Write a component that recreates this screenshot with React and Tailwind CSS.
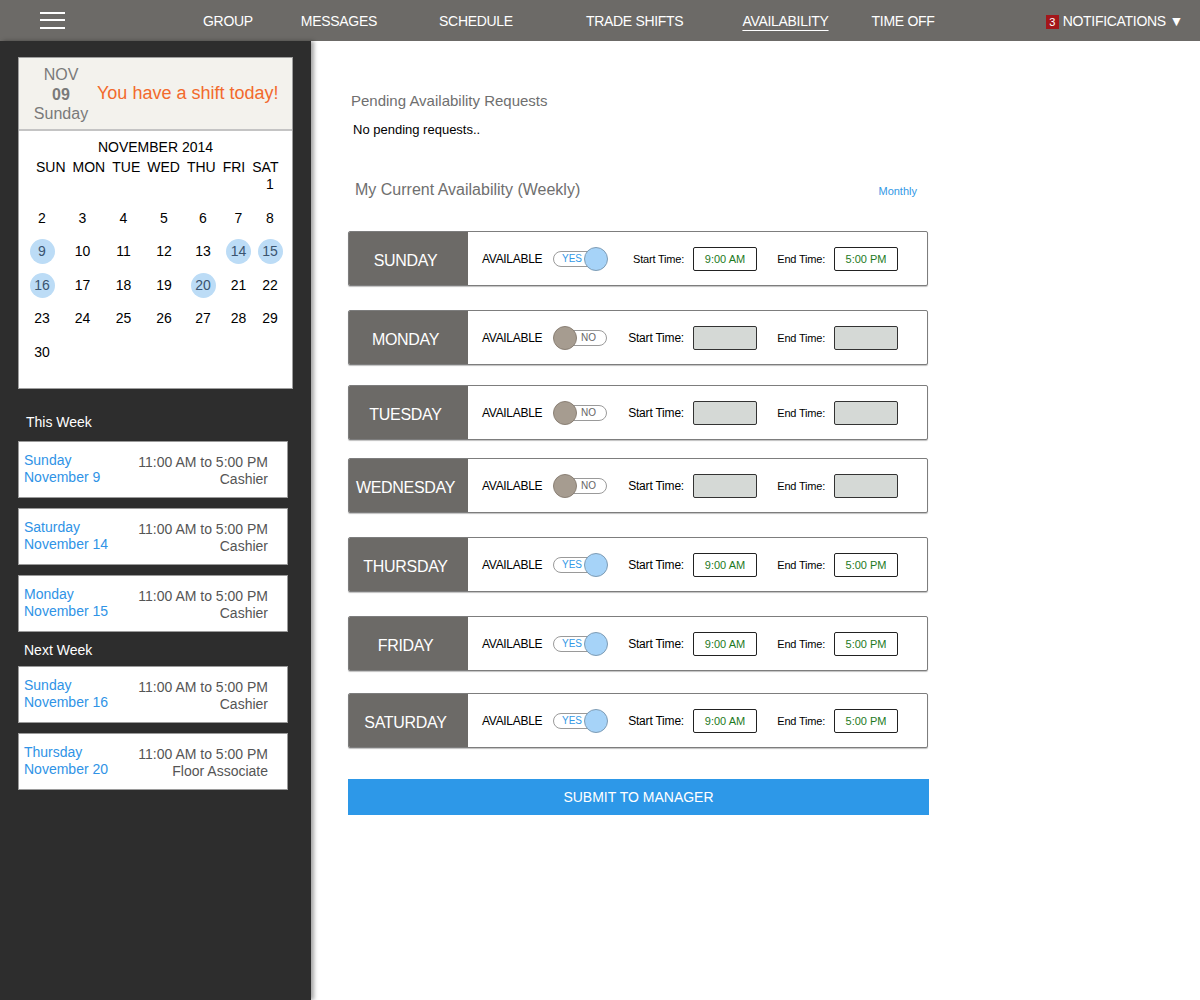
import React from "react";

const F = "font-['Liberation_Sans',Arial,Helvetica,sans-serif]";

function Toggle({ on }) {
  if (on) {
    return (
      <div className="relative w-[55px] h-[24px] shrink-0">
        <div className="absolute left-0 top-[4px] w-[50px] h-[16px] rounded-full border border-[#9a9a9a] bg-white">
          <span className="absolute left-[8px] top-[0px] text-[10px] leading-[14px] text-[#3399e6]">YES</span>
        </div>
        <div className="absolute left-[31px] top-0 w-[24px] h-[24px] rounded-full bg-[#a6d3f8] border border-[#7f9cb4]" />
      </div>
    );
  }
  return (
    <div className="relative w-[55px] h-[24px] shrink-0">
      <div className="absolute left-[2px] top-[4px] w-[52px] h-[16px] rounded-full border border-[#9a9a9a] bg-white">
        <span className="absolute left-[25px] top-0 text-[10px] leading-[14px] text-[#666]">NO</span>
      </div>
      <div className="absolute left-0 top-0 w-[24px] h-[24px] rounded-full bg-[#a69c90] border border-[#8a8075]" />
    </div>
  );
}

function TimeBox({ value }) {
  if (!value) {
    return <div className="w-[64px] h-[24px] rounded-[2px] border border-[#333] bg-[#d5d9d6] shrink-0" />;
  }
  return (
    <div className="w-[64px] h-[24px] rounded-[2px] border border-[#222] bg-white flex items-center justify-center text-[11px] text-[#1d7a1d] shrink-0">
      {value}
    </div>
  );
}

const days = [
  { name: "SUNDAY", on: true, mt: "mt-[32px]", small: true },
  { name: "MONDAY", on: false, mt: "mt-[24px]" },
  { name: "TUESDAY", on: false, mt: "mt-[20px]" },
  { name: "WEDNESDAY", on: false, mt: "mt-[18px]" },
  { name: "THURSDAY", on: true, mt: "mt-[24px]" },
  { name: "FRIDAY", on: true, mt: "mt-[24px]" },
  { name: "SATURDAY", on: true, mt: "mt-[22px]" },
];

function DayRow({ d }) {
  return (
    <div className={`${d.mt} w-[580px] h-[55px] flex rounded-[2px] border border-[#7d7d7d] bg-white shadow-[0_1px_1px_rgba(0,0,0,0.25)] overflow-hidden`}>
      <div className="w-[119px] shrink-0 bg-[#6c6a67] flex items-center justify-center pt-[4px] pr-[6px] text-white text-[16px] tracking-[-0.3px]">
        {d.name}
      </div>
      <div className="flex items-center pl-[14px] pt-[1px]">
        <span className="text-[12px] text-black w-[64px] tracking-[-0.3px]">AVAILABLE</span>
        <div className="ml-[7px]">
          <Toggle on={d.on} />
        </div>
        <div className={`w-[76px] text-right ${d.small ? "text-[11px]" : "text-[12px]"} text-black tracking-[-0.2px]`}>
          Start Time:
        </div>
        <div className="ml-[9px]">
          <TimeBox value={d.on ? "9:00 AM" : null} />
        </div>
        <div className="w-[68px] text-right text-[11px] text-black tracking-[-0.2px]">End Time:</div>
        <div className="ml-[9px]">
          <TimeBox value={d.on ? "5:00 PM" : null} />
        </div>
      </div>
    </div>
  );
}

const shifts1 = [
  ["Sunday", "November 9", "Cashier"],
  ["Saturday", "November 14", "Cashier"],
  ["Monday", "November 15", "Cashier"],
];
const shifts2 = [
  ["Sunday", "November 16", "Cashier"],
  ["Thursday", "November 20", "Floor Associate"],
];

function ShiftCard({ s }) {
  return (
    <div className="w-[270px] h-[57px] mb-[10px] bg-white border border-[#9a9a9a] flex justify-between pl-[5px] pr-[19px] pt-[10px]">
      <div className="text-[14px] leading-[17px] text-[#2f93e6]">
        <div>{s[0]}</div>
        <div>{s[1]}</div>
      </div>
      <div className="text-[14px] leading-[17px] text-[#555] text-right pt-[2px]">
        <div>11:00 AM to 5:00 PM</div>
        <div>{s[2]}</div>
      </div>
    </div>
  );
}

const weekHeaders = ["SUN", "MON", "TUE", "WED", "THU", "FRI", "SAT"];
const calRows = [
  [2, 3, 4, 5, 6, 7, 8],
  [9, 10, 11, 12, 13, 14, 15],
  [16, 17, 18, 19, 20, 21, 22],
  [23, 24, 25, 26, 27, 28, 29],
  [30, null, null, null, null, null, null],
];
const hl = [9, 14, 15, 16, 20];

function DayCell({ n }) {
  if (n === null) return <div />;
  const h = hl.includes(n);
  return (
    <div className="flex items-center justify-center">
      {h ? (
        <div className="w-[25px] h-[25px] rounded-full bg-[#bcdcf6] flex items-center justify-center text-[#3a5470]">{n}</div>
      ) : (
        <span>{n}</span>
      )}
    </div>
  );
}

export default function App() {
  const colsCls = "grid grid-cols-[40px_41px_41px_40px_38px_33px_30px]";
  return (
    <div className={`${F} w-[1200px] h-[1000px] flex flex-col bg-white overflow-hidden`}>
      {/* Top nav */}
      <div className="h-[41px] shrink-0 bg-[#6c6a67] flex items-center text-white text-[14px] tracking-[-0.3px]">
        <div className="ml-[40px] w-[25px] flex flex-col gap-[5.5px] -mt-[1px]">
          <div className="h-[2px] bg-white" />
          <div className="h-[2px] bg-white" />
          <div className="h-[2px] bg-white" />
        </div>
        <div className="flex items-center pt-[2px]">
          <span className="ml-[138px]">GROUP</span>
          <span className="ml-[48px]">MESSAGES</span>
          <span className="ml-[62px] -mt-[1px]">SCHEDULE</span>
          <span className="ml-[73px]">TRADE SHIFTS</span>
          <span className="ml-[59px] underline decoration-1 underline-offset-[4px]">AVAILABILITY</span>
          <span className="ml-[43px]">TIME OFF</span>
        </div>
        <div className="flex-1" />
        <div className="flex items-center mr-[17px] pt-[2px]">
          <span className="w-[13px] h-[14px] bg-[#a3161a] text-[11px] leading-[14px] text-center text-white">3</span>
          <span className="ml-[4px]">NOTIFICATIONS ▼</span>
        </div>
      </div>

      <div className="flex flex-1 min-h-0">
        {/* Sidebar */}
        <div className="w-[311px] shrink-0 bg-[#2d2d2d] shadow-[3px_0_4px_rgba(0,0,0,0.35)] z-10 pl-[18px] pt-[16px]">
          <div className="w-[275px] border border-[#9e9e9e] bg-white">
            <div className="h-[73px] bg-[#f3f2ed] border-b-2 border-[#c4c4c4] flex items-center">
              <div className="w-[84px] text-center text-[16px] leading-[19.5px] text-[#7a7a7a] pt-[2px]">
                <div>NOV</div>
                <div className="font-bold">09</div>
                <div>Sunday</div>
              </div>
              <div className="ml-[-6px] text-[18px] text-[#f26a2c]">You have a shift today!</div>
            </div>
            <div className="pt-[8px] pb-[19px] text-[14px] text-black">
              <div className="text-center leading-[16px]">NOVEMBER 2014</div>
              <div className="flex gap-[7px] pl-[17px] mt-[4px] leading-[16px]">
                {weekHeaders.map((w) => (
                  <span key={w}>{w}</span>
                ))}
              </div>
              <div className={`${colsCls} pl-[3px] h-[17px] leading-[17px] mt-[1px]`}>
                <div /><div /><div /><div /><div /><div />
                <DayCell n={1} />
              </div>
              <div className="pl-[3px] mt-[8.5px]">
                {calRows.map((r, i) => (
                  <div key={i} className={`${colsCls} h-[33.5px]`}>
                    {r.map((n, j) => (
                      <DayCell key={j} n={n} />
                    ))}
                  </div>
                ))}
              </div>
            </div>
          </div>

          <div className="mt-[25px] pl-[8px] text-white text-[14px] leading-[17px]">This Week</div>
          <div className="mt-[10px]">
            {shifts1.map((s, i) => (
              <ShiftCard key={i} s={s} />
            ))}
          </div>
          <div className="pl-[6px] text-white text-[14px] leading-[17px]">Next Week</div>
          <div className="mt-[7px]">
            {shifts2.map((s, i) => (
              <ShiftCard key={i} s={s} />
            ))}
          </div>
        </div>

        {/* Main */}
        <div className="flex-1 pl-[37px] pt-[51px]">
          <div className="ml-[3px] text-[15px] leading-[18px] text-[#6f6f6f]">Pending Availability Requests</div>
          <div className="ml-[5px] mt-[12px] text-[13px] leading-[16px] text-black">No pending requests..</div>
          <div className="mt-[42px] w-[580px] flex items-end justify-between pl-[7px] pr-[11px]">
            <span className="text-[16px] leading-[19px] text-[#6f6f6f]">My Current Availability (Weekly)</span>
            <span className="text-[11px] leading-[16px] text-[#3399e6]">Monthly</span>
          </div>
          {days.map((d) => (
            <DayRow key={d.name} d={d} />
          ))}
          <div className="mt-[31px] w-[581px] h-[36px] bg-[#2d98e8] flex items-center justify-center text-white text-[14px]">
            SUBMIT TO MANAGER
          </div>
        </div>
      </div>
    </div>
  );
}
